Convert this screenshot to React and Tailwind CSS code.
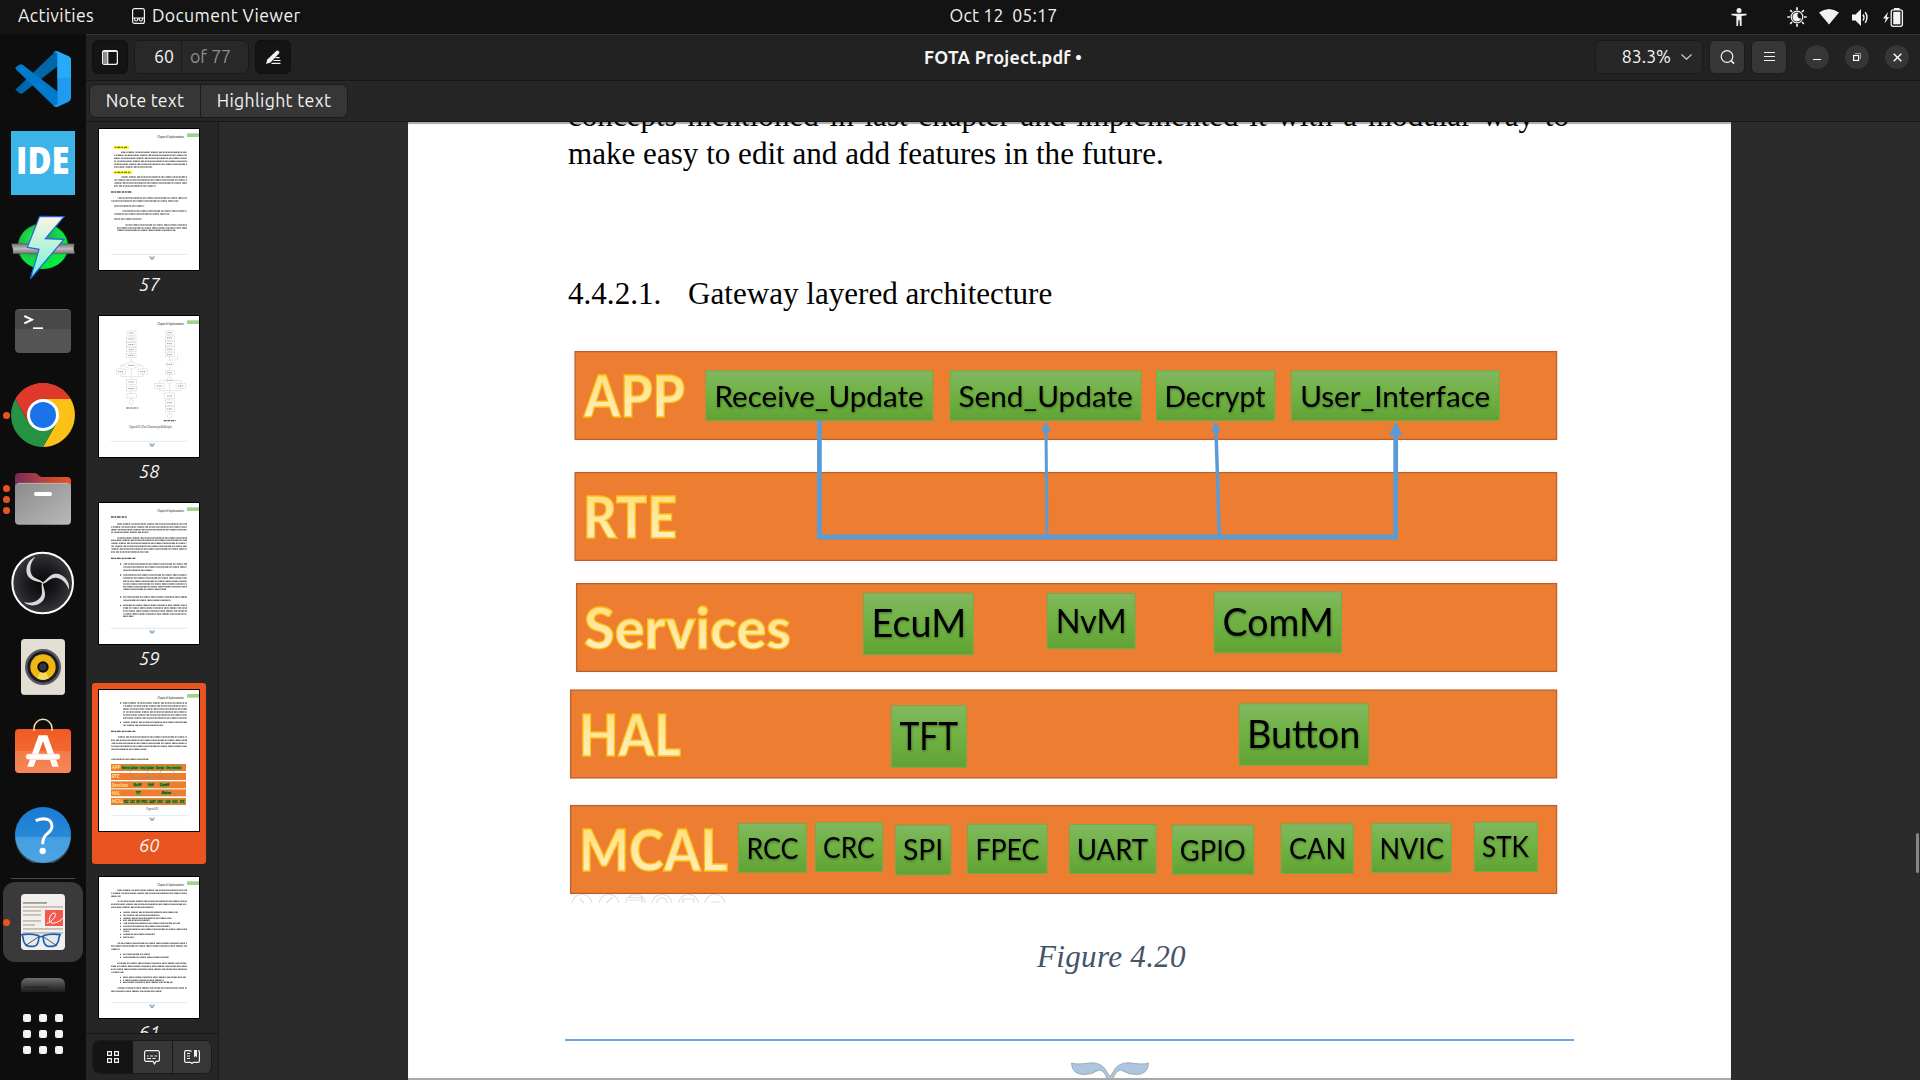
import React from "react";

const UI = "font-['Ubuntu','Noto_Sans',sans-serif]";

/* ---------- dock icons ---------- */

const VSCode = () => (
  <svg width="56" height="56" viewBox="0 0 168 168">
    <path d="M4 113 L120 2 Q128 -2 128 8 L128 46 L24 126 Q18 131 12 125 L2 116 Q-1 114 4 113Z" fill="#0065a9" />
    <path d="M4 56 Q-1 52 3 48 L13 41 Q18 38 24 42 L128 122 L128 160 Q124 171 116 164 Z" fill="#007acc" />
    <path d="M127 0 L161 16 Q168 20 168 27 V141 Q168 148 161 152 L127 168 Q120 169 114 163 Q126 168 127 156 V12 Q126 0 114 5 Q120 -1 127 0Z" fill="#1f9cf0" />
    <path d="M127 4 L161 16 Q168 20 168 27 V80 H127Z" fill="#2bb0fb" opacity=".7" />
  </svg>
);

const Ide = () => (
  <svg width="64" height="64" viewBox="0 0 64 64">
    <rect width="64" height="64" fill="#3cb4e7" />
    <text x="5" y="43" textLength="53.5" lengthAdjust="spacingAndGlyphs" fontFamily="Open Sans, sans-serif" fontWeight="800" fontSize="36.500" fill="#fff">IDE</text>
  </svg>
);

const Lightning = () => (
  <svg width="64" height="64" viewBox="0 0 192 192">
    <defs>
      <linearGradient id="boltFill" x1="0" y1="0" x2="0" y2="1"><stop offset="0" stopColor="#fbf6e2" /><stop offset=".6" stopColor="#a5f3da" /><stop offset="1" stopColor="#5df5d8" /></linearGradient>
      <radialGradient id="boltOrb" cx=".3" cy=".3" r=".8"><stop offset="0" stopColor="#1ef24a" /><stop offset=".4" stopColor="#1fae50" /><stop offset=".6" stopColor="#12d945" /><stop offset="1" stopColor="#00f23c" /></radialGradient>
      <linearGradient id="boltBar" x1="0" y1="0" x2="0" y2="1"><stop offset="0" stopColor="#6f6f6f" /><stop offset=".5" stopColor="#bcbcbc" /><stop offset="1" stopColor="#757575" /></linearGradient>
    </defs>
    <ellipse cx="96" cy="94" rx="76" ry="69" fill="url(#boltOrb)" stroke="#052a10" strokeWidth="2" />
    <path d="M1 86 H190 L188 100 L191 116 H6 V104Z" fill="url(#boltBar)" stroke="#444" />
    <path d="M86 4 L159 5 L103 71 L159 73 L58 192 L84 103 L49 97Z" fill="url(#boltFill)" stroke="#2b5fe0" strokeWidth="3.5" />
  </svg>
);

const Terminal = () => (
  <svg width="56" height="44" viewBox="0 0 168 132">
    <rect width="168" height="132" rx="13" fill="#555" />
    <path d="M0 60 V13 Q0 0 13 0 H155 Q168 0 168 13 V60Z" fill="#484848" />
    <path d="M12 1 H156" stroke="#777" strokeWidth="2" />
    <path d="M28 21 L51 32 L28 43" fill="none" stroke="#fff" strokeWidth="6" />
    <rect x="54" y="55" width="30" height="5" fill="#fff" />
  </svg>
);

const Chrome = () => (
  <svg width="64" height="64" viewBox="0 0 192 192">
    <path d="M96 96 L13 48 A96 96 0 0 1 179 48 L96 48Z" fill="#e33b2e" />
    <path d="M96 96 L137 120 L96 192 A96 96 0 0 0 179 48 L96 48Z" fill="#fbc116" />
    <path d="M96 96 L54 120 L13 48 A96 96 0 0 0 96 192 L137 120Z" fill="#259244" />
    <path d="M13 48 L54 120 L96 60 L96 48 L179 48 A96 96 0 0 0 13 48Z" fill="#df382c" />
    <circle cx="96" cy="96" r="48" fill="#fff" />
    <circle cx="96" cy="96" r="39" fill="#1a73e8" />
  </svg>
);

const Files = () => (
  <svg width="56" height="52" viewBox="0 0 168 156">
    <defs>
      <linearGradient id="folderBack" x1="0" y1="0" x2="1" y2="0"><stop offset="0" stopColor="#762a5c" /><stop offset=".5" stopColor="#b8433f" /><stop offset="1" stopColor="#e95420" /></linearGradient>
      <linearGradient id="folderFront" x1="0" y1="0" x2="1" y2="1"><stop offset="0" stopColor="#8b8b8b" /><stop offset="1" stopColor="#b9b9b9" /></linearGradient>
    </defs>
    <path d="M0 90 V12 Q0 0 12 0 H60 Q66 0 72 8 Q76 12 84 12 H156 Q168 12 168 24 V90Z" fill="url(#folderBack)" />
    <rect y="30" width="168" height="125" rx="12" fill="url(#folderFront)" />
    <path d="M10 31 H158" stroke="#c8c8c8" strokeWidth="2" />
    <rect x="57" y="57" width="54" height="12" rx="5" fill="#fff" />
  </svg>
);

const Obs = () => (
  <svg width="64" height="64" viewBox="0 0 192 192">
    <defs>
      <radialGradient id="obsFill"><stop offset="0" stopColor="#050506" /><stop offset=".55" stopColor="#1d1b1f" /><stop offset="1" stopColor="#39363b" /></radialGradient>
    </defs>
    <circle cx="95" cy="96" r="91" fill="url(#obsFill)" stroke="#fff" strokeWidth="6" />
    <g fill="#d9d9da">
      <path d="M73 18 C48 26 38 62 55 80 C68 92 84 90 95 97 L96 94 C86 84 68 84 61 69 C54 52 60 32 73 18Z" />
      <path d="M73 18 C48 26 38 62 55 80 C68 92 84 90 95 97 L96 94 C86 84 68 84 61 69 C54 52 60 32 73 18Z" transform="rotate(120 95 96)" />
      <path d="M73 18 C48 26 38 62 55 80 C68 92 84 90 95 97 L96 94 C86 84 68 84 61 69 C54 52 60 32 73 18Z" transform="rotate(240 95 96)" />
    </g>
  </svg>
);

const Rhythmbox = () => (
  <svg width="44" height="56" viewBox="0 0 132 168">
    <rect width="132" height="168" rx="11" fill="#e2ded3" />
    <path d="M8 167 H124" stroke="#bcb8ac" strokeWidth="2" />
    <circle cx="66" cy="84" r="54" fill="#5a5a5c" />
    <circle cx="66" cy="84" r="47" fill="#1c1b2c" />
    <circle cx="66" cy="84" r="38" fill="#edb80f" />
    <path d="M66 84 L48 118 A38 38 0 0 0 84 118Z" fill="#f9da5e" />
    <circle cx="66" cy="84" r="17" fill="#0c0c0c" />
    <circle cx="66" cy="84" r="11" fill="#343434" />
  </svg>
);

const Software = () => (
  <svg className="mb-3 overflow-visible" width="56" height="56" viewBox="0 0 168 168">
    <defs><linearGradient id="bag" x1="0" y1="0" x2="0" y2="1"><stop offset="0" stopColor="#f05a22" /><stop offset="1" stopColor="#f4773f" /></linearGradient></defs>
    <rect y="36" width="168" height="132" rx="12" fill="url(#bag)" />
    <path d="M0 102 H168 V156 Q168 168 156 168 H12 Q0 168 0 156Z" fill="#fff" opacity=".12" />
    <path d="M57 42 V34 A27 27 0 0 1 111 34 V42" fill="none" stroke="#f6dcae" strokeWidth="4.5" />
    <path d="M71 55 H97 L131 149 H112 L105 129 H63 L56 149 H37Z M84 72 L70 111 H98Z" fill="#fff" fillRule="evenodd" />
    <rect x="33" y="111" width="102" height="16" rx="7" fill="#fff" stroke="#fbc9ae" strokeWidth="2" />
  </svg>
);

const Help = () => (
  <svg width="56" height="56" viewBox="0 0 168 168">
    <defs><linearGradient id="helpFill" x1="0" y1="0" x2="0" y2="1"><stop offset="0" stopColor="#1a7bd4" /><stop offset="1" stopColor="#3593dd" /></linearGradient></defs>
    <circle cx="84" cy="84" r="84" fill="url(#helpFill)" />
    <path d="M0 90 H168 A84 84 0 0 1 0 90Z" fill="#7cc8ee" opacity=".35" />
    <path d="M62 41 Q75 35 87 35 Q110 36 111 57 Q111 69 97 80 Q83 91 83 112" fill="none" stroke="#fff" strokeWidth="9" strokeLinecap="butt" />
    <circle cx="83" cy="132" r="9.500" fill="#fff" />
  </svg>
);

const Evince = () => (
  <svg width="44" height="56" viewBox="0 0 132 168">
    <rect width="132" height="168" rx="11" fill="#f1f0ef" />
    <rect x="6" y="24" width="72" height="5.500" fill="#a49d8e" />
    <g fill="#c6c0b4">
      <rect x="6" y="36" width="120" height="5.500" /><rect x="6" y="48" width="54" height="5.500" /><rect x="6" y="60" width="54" height="5.500" />
      <rect x="6" y="78" width="54" height="5.500" /><rect x="6" y="90" width="36" height="5.500" /><rect x="6" y="102" width="120" height="5.500" /><rect x="6" y="114" width="120" height="5.500" />
    </g>
    <rect x="72" y="48" width="54" height="48" fill="#f4594d" />
    <path d="M77 88 C92 84 108 66 102 58 C94 52 82 72 86 82 C92 94 116 84 126 72" fill="none" stroke="#fff" strokeWidth="3" />
    <g fill="#dfe6ee" fillOpacity=".5" stroke="#1a5fb4" strokeWidth="5">
      <path d="M3 122 Q30 118 53 125 Q55 152 40 157 H24 Q8 154 6 130Z" />
      <path d="M117 122 Q90 118 67 125 Q65 152 80 157 H96 Q112 154 114 130Z" />
    </g>
    <path d="M52 131 Q60 124 68 131" fill="none" stroke="#1a5fb4" strokeWidth="5" />
    <path d="M12 156 L50 130 M108 156 L70 130" stroke="#555" strokeWidth="3" />
  </svg>
);

const dock = [
  { icon: <VSCode /> }, { icon: <Ide /> }, { icon: <Lightning /> }, { icon: <Terminal /> },
  { icon: <Chrome />, dots: 1 }, { icon: <Files />, dots: 3 }, { icon: <Obs /> },
  { icon: <Rhythmbox /> }, { icon: <Software /> }, { icon: <Help /> },
];

const Dots = ({ n }) => (
  <div className="absolute left-[3px] top-0 flex h-full flex-col justify-center gap-1">
    {Array.from({ length: n }, (_, i) => <span key={i} className="size-[7px] rounded-full bg-[#e95420]" />)}
  </div>
);

const Dock = () => (
  <nav className="flex w-[86px] shrink-0 flex-col bg-[#0d0d0d] pt-[3px]">
    {dock.map((d, i) => (
      <div key={i} className="relative flex h-[84px] w-full items-center justify-center">
        {d.dots && <Dots n={d.dots} />}
        {d.icon}
      </div>
    ))}
    <div className="mx-[11px] mt-[1px] h-px bg-[#4a4a4a]" />
    <div className="relative mx-[3px] mt-[3px] flex h-20 items-center justify-center rounded-xl bg-[#3a3a3a]">
      <div className="absolute -left-[3px] top-0 h-full"><Dots n={1} /></div>
      <Evince />
    </div>
    <div className="mx-auto mt-4 flex h-[14px] w-11 flex-col gap-1 rounded-t-md bg-gradient-to-b from-[#6e6e6e] to-[#1c1c1c] px-1 pt-2">
      <div className="h-[2px] w-6 bg-[#2a2a2a]" />
    </div>
    <div className="mx-auto mt-[22px] grid grid-cols-3 gap-2">
      {Array.from({ length: 9 }, (_, i) => <span key={i} className="size-2 rounded-[2px] bg-[#f2f2f2]" />)}
    </div>
  </nav>
);

/* ---------- top panel ---------- */

const TopBar = () => (
  <header className="grid h-[34px] grid-cols-[1fr_auto_1fr] items-center bg-[#131313] text-[17.7px] tracking-[0.35px] text-[#f2f2f2]">
    <div className="flex items-center pb-px pl-[18px]">
      <span className="w-[77px] whitespace-nowrap">Activities</span>
      <svg className="ml-[37px]" width="13" height="16" viewBox="0 0 13 16" fill="none" stroke="#f2f2f2">
        <rect x=".6" y=".6" width="11.800" height="14.800" rx="2" strokeWidth="1.200" />
        <path d="M1 10 H12 M2.500 10.500 Q2.500 13 4.200 13 Q5.800 13 5.800 10.500 M7.200 10.500 Q7.200 13 8.800 13 Q10.500 13 10.500 10.500" strokeWidth="1.100" />
      </svg>
      <span className="ml-[7px] whitespace-nowrap">Document Viewer</span>
    </div>
    <div className="whitespace-pre pb-px pl-[87px] tracking-[0.2px]"><span>Oct 12  05:17</span></div>
    <div className="flex items-center justify-end pr-4 text-[#f2f2f2]">
      <svg className="mr-[40px]" width="16" height="18" viewBox="0 0 16 18" fill="currentColor">
        <circle cx="8" cy="2.600" r="2.500" /><path d="M.5 5.800 H15.500 V7.300 L10.600 8 V18 H9 L8.500 12 H7.500 L7 18 H5.400 V8 L.5 7.300Z" />
      </svg>
      <svg className="mr-3" width="20" height="20" viewBox="0 0 20 20" fill="currentColor">
        <path d="M10 .3V3 M10 17V19.700 M.3 10H3 M17 10H19.700 M3.200 3.200L5 5 M15 15L16.800 16.800 M3.200 16.800L5 15 M15 5L16.800 3.200" stroke="currentColor" strokeWidth="1.700" />
        <circle cx="10" cy="10" r="5.800" fill="none" stroke="currentColor" strokeWidth="1.200" />
        <path d="M10 5.500 A4.500 4.500 0 1 0 14.500 10 A3.300 3.300 0 0 1 10 5.500Z" transform="rotate(20 10 10)" />
      </svg>
      <svg className="mr-[13px]" width="20" height="16" viewBox="0 0 20 16" fill="currentColor"><path d="M0 3.500 Q10 -3.500 20 3.500 L10 15.500Z" /></svg>
      <svg className="mr-[13px]" width="18" height="17" viewBox="0 0 18 17" fill="currentColor">
        <path d="M0 5.500 H3.500 L9 0 V17 L3.500 11.500 H0Z" />
        <path d="M11 5.500 Q13 8.500 11 11.500 M13.200 3.200 Q16.800 8.500 13.200 13.800" fill="none" stroke="currentColor" strokeWidth="1.500" />
      </svg>
      <svg width="21" height="19" viewBox="0 0 21 19" fill="currentColor">
        <path d="M5 4 L0 10.500 H2.800 L1.500 15.500 L6.200 9 H3.800Z" />
        <rect x="8.200" y="1.800" width="11.200" height="16.500" rx="2" fill="none" stroke="currentColor" strokeWidth="1.300" />
        <rect x="10.200" y="3.800" width="7.200" height="12.500" /><rect x="11" y="0" width="5.600" height="2" />
      </svg>
    </div>
  </header>
);

const HeaderBar = () => (
  <div className="grid h-[47px] grid-cols-[1fr_auto_1fr] items-center border-b border-t border-b-[#171717] border-t-[#363636] bg-[#222] text-[17.7px] text-[#f5f5f5]">
    <div className="flex items-center pb-px pl-[6px]">
      <div className="flex h-[34px] w-9 items-center justify-center rounded-md border border-[#101010] bg-[#141414]">
        <svg width="16" height="15" viewBox="0 0 16 15"><rect x=".6" y=".6" width="14.800" height="13.800" rx="1.800" fill="none" stroke="#f2f2f2" strokeWidth="1.300" /><rect x="1.200" y="2" width="4" height="12" fill="#8f8f8f" /><path d="M1 1.500 H15 M5.700 1V14" stroke="#f2f2f2" strokeWidth="1.200" /></svg>
      </div>
      <div className="ml-[6px] flex h-[34px] w-[115px] items-center rounded-md border border-[#191919] bg-[#282828]">
        <span className="flex h-full w-[47px] items-center justify-end border-r border-[#191919] pr-[7px]">60</span>
        <span className="pl-[8px] text-[#8e8e8e]">of 77</span>
      </div>
      <div className="ml-[6px] flex h-[34px] w-9 items-center justify-center rounded-md border border-[#101010] bg-[#141414]">
        <svg width="15" height="15" viewBox="0 0 15 15" fill="#f2f2f2"><path d="M0 14 L1.300 9.500 L10.500 .8 Q11.500 0 12.700 1.200 Q13.800 2.500 13 3.400 L4.500 12.500Z" /><path d="M9.500 7.700H13.500 M7.500 10.500H14.500 M5.500 13.300H14.500" stroke="#f2f2f2" strokeWidth="1.200" /></svg>
      </div>
    </div>
    <div className="pb-px text-[17.8px] font-bold tracking-[0.2px]">FOTA Project.pdf •</div>
    <div className="flex items-center justify-end pb-px pr-[11px]">
      <div className="flex h-[34px] w-[108px] items-center justify-end rounded-md border border-[#191919] bg-[#272727] pr-[10px]">
        <span>83.3%</span>
        <svg className="ml-[10px]" width="11" height="6" viewBox="0 0 11 6" fill="none" stroke="#cfcfcf" strokeWidth="1.200"><path d="M.5 .5 L5.500 5.200 L10.500 .5" /></svg>
      </div>
      <div className="ml-[6px] flex h-[34px] w-9 items-center justify-center rounded-md border border-[#1b1b1b] bg-[#363636]">
        <svg width="15" height="15" viewBox="0 0 15 15" fill="none" stroke="#f2f2f2" strokeWidth="1.200"><circle cx="7" cy="6.500" r="5.800" /><path d="M11 10.500 L14 13.700" strokeWidth="1.700" /></svg>
      </div>
      <div className="ml-[6px] flex h-[34px] w-9 items-center justify-center rounded-md border border-[#1b1b1b] bg-[#363636]">
        <svg width="11" height="10" viewBox="0 0 11 10" stroke="#f2f2f2"><path d="M0 .5H11 M0 4.500H11 M0 8.500H11" /></svg>
      </div>
      <div className="ml-[18px] flex gap-4">
        <span className="flex size-6 items-center justify-center rounded-full bg-[#363636]"><svg width="8" height="8" viewBox="0 0 8 8"><path d="M0 6.500H8" stroke="#fff" /></svg></span>
        <span className="flex size-6 items-center justify-center rounded-full bg-[#363636]"><svg width="8" height="8" viewBox="0 0 8 8" fill="none" stroke="#fff"><rect x=".6" y="2.500" width="5" height="5" strokeWidth="1.200" /><path d="M2 .5H7.500V6" stroke="#999" /></svg></span>
        <span className="flex size-6 items-center justify-center rounded-full bg-[#363636]"><svg width="9" height="9" viewBox="0 0 9 9"><path d="M.7 .7L8.300 8.300M8.300 .7L.7 8.300" stroke="#fff" strokeWidth="1.400" /></svg></span>
      </div>
    </div>
  </div>
);

const AnnotationBar = () => (
  <div className="flex h-[41px] items-center border-b border-[#171717] bg-[#262626] pl-[3px] text-[17.7px] tracking-[0.25px] text-[#f2f2f2]">
    <div className="flex h-[34px] overflow-hidden rounded-[7px] border border-[#1b1b1b] bg-[#363636]">
      <span className="flex w-[111px] items-center justify-center border-r border-[#1b1b1b]">Note text</span>
      <span className="flex w-[146px] items-center justify-center tracking-[0.35px]">Highlight text</span>
    </div>
  </div>
);

/* ---------- thumbnails ---------- */
/* Page drawings use a 303 x 423 unit sheet; rows are [x1, x2, y]. */

const L = (x1, x2, ...ys) => ys.map((y) => [x1, x2, y]);

const Ornament = ({ y }) => (
  <g>
    <path d={`M36 ${y - 10}H264`} stroke="#d3e4f4" strokeWidth="2.500" />
    <path d={`M151 ${y - 5}Q159 ${y - 4} 159 ${y}Q160 ${y - 4} 168 ${y - 5}L166 ${y}L163 ${y + 6}H156L152 ${y}Z`} fill="#9fb3c6" />
  </g>
);

const Sheet = ({ rows, heads = [], footer = 387, header = 25, children }) => (
  <svg width="100" height="141" viewBox="0 0 300 423" className="block bg-white">
    <rect x="264" y={header - 12} width="39" height="11" fill="#a3d08c" />
    <text x="175" y={header + 3} textLength="80" fontSize="9" fontFamily="Liberation Serif, serif" fill="#333">Chapter 4: Implementation</text>
    {rows.map(([a, b, y], i) => (
      <g key={i} stroke="#222" strokeDashoffset={i * 11}>
        <path d={`M${a} ${y}H${b}`} strokeOpacity=".36" strokeWidth="4.500" strokeDasharray="14 2.500 22 3 9 2.500 17 3" />
        <path d={`M${a} ${y}H${b}`} strokeOpacity=".5" strokeWidth="3" strokeDasharray="3 3 6 4 3 5 8 3 4 6" />
      </g>
    ))}
    {heads.map(([a, b, y], i) => (
      <path key={i} d={`M${a} ${y}H${b}`} stroke="#111" strokeOpacity=".7" strokeWidth="4" strokeDasharray="8 2 5 2 12 3" />
    ))}
    {children}
    <Ornament y={footer} />
  </svg>
);

const P57 = () => (
  <Sheet
    footer={386}
    rows={[...L(66, 264, 70), ...L(45, 264, 79, 88, 97, 106), [45, 160, 114], [66, 264, 144], ...L(45, 264, 153, 162), [45, 171, 171], [55, 264, 207], [36, 238, 216], [45, 136, 231], [69, 264, 246], [45, 211, 255], [45, 128, 270], [78, 264, 288], [54, 264, 297], [54, 230, 304]]}
    heads={[[36, 99, 189]]}
  >
    <rect x="45" y="51" width="45" height="9" fill="#fdf90a" />
    <rect x="45" y="126" width="54" height="9" fill="#fdf90a" />
    <path d="M47 55H87M47 130H96" stroke="#222" strokeOpacity=".6" strokeWidth="3.500" strokeDasharray="5 3 9 3" />
  </Sheet>
);

const P58 = () => (
  <Sheet footer={386} rows={[]}>
    <g fill="#fff" stroke="#cfcfcf" strokeWidth="1.500">
      <path d="M97 51V265M212 51V300M97 148H66V170M97 148H132V170M66 170V182H97M132 170V182H97M212 194H182V220M212 194H246V220M182 215V224H246V215M212 132H236V116" fill="none" />
      <rect x="83" y="45" width="29" height="13" rx="6" /><rect x="198" y="43" width="29" height="13" rx="6" />
      {[63, 80, 94, 112].map((y) => <rect key={y} x="83" y={y} width="28" height="13" />)}
      {[60, 77, 92, 109].map((y) => <rect key={y} x="199" y={y} width="27" height="13" />)}
      <path d="M97 136L124 148L97 160L70 148ZM212 132L226 145L212 158L198 145ZM212 182L228 193L212 204L196 193Z" />
      <rect x="52" y="159" width="27" height="15" /><rect x="118" y="159" width="27" height="15" />
      <rect x="82" y="190" width="31" height="16" /><rect x="82" y="211" width="31" height="14" /><rect x="84" y="233" width="28" height="13" />
      <rect x="199" y="163" width="27" height="13" /><rect x="167" y="202" width="29" height="15" /><rect x="231" y="202" width="29" height="15" />
      <rect x="197" y="231" width="29" height="17" /><rect x="199" y="252" width="27" height="16" /><rect x="199" y="272" width="27" height="14" />
      <circle cx="97" cy="258" r="7" /><circle cx="212" cy="300" r="7" />
    </g>
    <path d="M90 51H104M88 69H106M88 86H106M90 101H104M88 118H106M88 148H106M57 167H73M124 167H140M88 198H106M88 218H106M205 50H219M204 66H220M204 83H220M204 99H220M204 116H220M204 145H220M204 170H220M204 193H220M173 210H190M237 210H254M204 240H220M204 260H220M204 279H220" stroke="#999" strokeWidth="3" strokeDasharray="4 1.500" />
    <path d="M81 276H118M194 314H230" stroke="#666" strokeWidth="3.500" strokeDasharray="9 2" />
    <text x="90" y="336" textLength="129" fontSize="9" fontStyle="italic" fontFamily="Liberation Serif, serif" fill="#44546a">Figure 4.19: (Flow Chart encrypt &amp; Decrypt )</text>
  </Sheet>
);

const P59 = () => (
  <Sheet
    footer={386}
    rows={[[55, 264, 63], ...L(36, 264, 72, 80), [36, 149, 88], [55, 264, 105], ...L(36, 264, 112, 121, 130, 138), [36, 148, 147], ...L(72, 264, 183, 192), [72, 161, 202], ...L(72, 264, 216, 225, 235, 243, 251), [72, 201, 259], [72, 264, 282], [72, 217, 292], ...L(72, 264, 307, 315, 324, 333), [72, 103, 340]]}
    heads={[[36, 85, 42], [36, 111, 166]]}
  >
    {[183, 216, 282, 307].map((y) => <circle key={y} cx="65" cy={y} r="2" fill="#333" />)}
  </Sheet>
);

const bars60 = [
  [222, "APP", 26, [[32, 51, "Receive_Update"], [87, 43, "Send_Update"], [134, 27, "Decrypt"], [165, 47, "User_Interface"]]],
  [249, "RTE", 23, []],
  [274, "Services", 49, [[67, 25, "EcuM"], [110, 19, "NvM"], [146, 29, "ComM"]]],
  [298, "HAL", 25, [[74, 16, "TFT"], [152, 29, "Button"]]],
  [324, "MCAL", 34, [[38, 16, "RCC"], [57, 15, "CRC"], [75, 13, "SPI"], [90, 20, "FPEC"], [114, 21, "UART"], [138, 18, "GPIO"], [162, 17, "CAN"], [183, 18, "NVIC"], [206, 15, "STK"]]],
];

const P60 = () => (
  <Sheet
    footer={387}
    header={24}
    rows={[...L(72, 264, 39, 48, 57, 66, 75, 84, 97), [72, 193, 106], [55, 264, 141], ...L(36, 264, 151, 160, 169), [36, 143, 178], [36, 148, 208]]}
    heads={[[36, 111, 124]]}
  >
    <circle cx="65" cy="39" r="2" fill="#333" /><circle cx="65" cy="97" r="2" fill="#333" />
    {bars60.map(([y, name, w, items]) => (
      <g key={name}>
        <rect x="36" y={y} width="225" height="21" fill="#ed7d31" />
        <text x="38" y={y + 15.5} textLength={w} lengthAdjust="spacingAndGlyphs" fontFamily="Lato, sans-serif" fontWeight="900" fontSize="14" fill="#ffe38d">{name}</text>
        {items.map(([x, iw, t]) => (
          <g key={t}>
            <rect x={36 + x} y={y + 4} width={iw} height="13" fill="#6aaa3e" />
            <text x={37 + x} y={y + 13.5} textLength={iw - 2} lengthAdjust="spacingAndGlyphs" fontFamily="Lato, sans-serif" fontWeight="700" fontSize="9" fill="#111">{t}</text>
          </g>
        ))}
      </g>
    ))}
    <path d="M94 238V263H224V238M146 238V263M184 238V263" fill="none" stroke="#8a93a0" strokeWidth="1.500" />
    <text x="141" y="360" textLength="36" fontSize="9" fontStyle="italic" fontFamily="Liberation Serif, serif" fill="#44546a">Figure 4.20</text>
  </Sheet>
);

const P61 = () => (
  <Sheet
    footer={387}
    header={25}
    rows={[[55, 264, 40], [36, 264, 49], [36, 66, 58], [55, 264, 73], [36, 264, 82], [36, 163, 91], [72, 237, 106], [72, 183, 115], [72, 218, 124], [72, 153, 130], [72, 243, 139], [72, 213, 148], [72, 264, 157], [72, 91, 163], [72, 168, 172], [72, 106, 181], [55, 264, 199], [36, 264, 207], [36, 63, 217], [72, 155, 232], [72, 210, 241], [55, 264, 259], [36, 264, 268], [36, 264, 277], [36, 73, 286], [72, 261, 301], [72, 195, 310], [72, 221, 316], [55, 264, 333], [36, 188, 343]]}
  >
    {[106, 115, 124, 130, 139, 148, 157, 172, 181, 232, 241, 301, 310, 316].map((y) => <path key={y} d={`M63 ${y}h3`} stroke="#444" strokeWidth="3" />)}
  </Sheet>
);

const pages = [[57, P57], [58, P58], [59, P59], [60, P60], [61, P61]];

const Sidebar = () => (
  <aside className="flex w-[133px] shrink-0 flex-col border-r border-[#1a1a1a] bg-[#262626]">
    <div className="h-[911px] overflow-hidden pl-[6px] text-center text-[18px] italic leading-6 text-[#f5f5f5]">
      {pages.map(([n, Page]) => (
        <div key={n} className={n === 60 ? "mb-[6px] h-[181px] w-[114px] rounded-[3px] bg-[#e95420] pt-[6px]" : "mb-[6px] h-[181px] w-[114px] pt-[6px]"}>
          <div className="mx-auto w-[102px] border border-black"><Page /></div>
          <div className="mt-px pl-px">{n}</div>
        </div>
      ))}
    </div>
    <div className="flex flex-1 items-center border-t border-[#171717] pl-[6px]">
      <div className="flex h-[34px] w-[120px] overflow-hidden rounded-[7px] border border-[#1a1a1a] bg-[#363636]">
        <span className="flex w-10 items-center justify-center bg-[#141414] pr-px">
          <svg width="12" height="12" viewBox="0 0 12 12" fill="none" stroke="#f2f2f2" strokeWidth="1.200"><path d="M.6.600h3.800v3.800h-3.800zM7.600.600h3.800v3.800h-3.800zM.6 7.600h3.800v3.800h-3.800zM7.600 7.600h3.800v3.800h-3.800z" /></svg>
        </span>
        <span className="flex w-10 items-center justify-center border-r border-[#1a1a1a] pr-px">
          <svg width="16" height="15" viewBox="0 0 16 15" fill="none" stroke="#f2f2f2" strokeWidth="1.200"><path d="M2.500.600H13.500Q15.400.600 15.400 2.500V9.500Q15.400 11.400 13.500 11.400H12L10.500 13.800L9 11.400H2.500Q.6 11.400.6 9.500V2.500Q.6.600 2.500.600Z" /><path d="M3 6H4.500M6 6H9M10.500 6H13M3 8.500H7M8.500 8.500H11.500" /></svg>
        </span>
        <span className="flex flex-1 items-center justify-center">
          <svg width="16" height="14" viewBox="0 0 16 14" fill="none" stroke="#f2f2f2" strokeWidth="1.200"><path d="M7.500 1.500Q6.500.600 5 .6H2Q.6.600.6 2V11.200Q.6 12.400 2 12.400H6.500L8 13.400L9.500 12.400H14Q15.400 12.400 15.400 11V2Q15.400.600 14 .6" /><path d="M3 3.500H6M3 6H6M3 8.500H6" /><path d="M10 0H13V7.500L11.500 6L10 7.500Z" fill="#f2f2f2" stroke="none" /></svg>
        </span>
      </div>
    </div>
  </aside>
);

/* ---------- layered architecture figure ---------- */

const layers = [
  { name: "APP", x: 574.5, y: 351, h: 89, tx: 584, tw: 101, ty: 416.5 },
  { name: "RTE", x: 574.5, y: 472, h: 89, tx: 583, tw: 94, ty: 538 },
  { name: "Services", x: 576, y: 583, h: 89, tx: 584, tw: 207, ty: 649 },
  { name: "HAL", x: 570, y: 689.5, h: 89, tx: 579, tw: 102, ty: 755.5 },
  { name: "MCAL", x: 570, y: 805, h: 89, tx: 579, tw: 149, ty: 871 },
];

/* [label, x, y, width, height, textLeft, textRight, baseline, size] */
const modules = [
  ["Receive_Update", 705.5, 370.3, 227.8, 50.7, 717, 922.5, 406.7, 29.8],
  ["Send_Update", 949.6, 370.3, 191.8, 50.7, 959.5, 1131.6, 406.7, 29.8],
  ["Decrypt", 1156, 370.3, 119.2, 50.7, 1167, 1265, 406.7, 29.8],
  ["User_Interface", 1291, 370.3, 208.7, 50.7, 1302.5, 1489, 406.7, 29.8],
  ["EcuM", 863, 592.7, 110.6, 62.3, 875, 963, 637, 39],
  ["NvM", 1046.7, 593, 88.8, 56, 1058.5, 1123.5, 632.7, 32.6],
  ["ComM", 1213.7, 591.3, 128.3, 62, 1223.8, 1330.5, 636, 39],
  ["TFT", 891, 705.3, 75.8, 62.4, 900, 957.5, 749.5, 39],
  ["Button", 1238.7, 703.3, 130.2, 62.4, 1250.3, 1357.5, 748.3, 39],
  ["RCC", 738, 823, 68.7, 49.7, 749, 797.5, 858.7, 29.3],
  ["CRC", 815, 822.2, 68, 49.7, 824.3, 873.7, 858, 29.3],
  ["SPI", 895.3, 824.6, 56, 50.7, 904, 940.3, 860.3, 29.3],
  ["FPEC", 967, 823.7, 80.5, 50.3, 978, 1038.5, 859.7, 29.3],
  ["UART", 1069, 824, 87.4, 50, 1079, 1147.5, 860, 29.3],
  ["GPIO", 1171.9, 824.7, 82.3, 50, 1181, 1244.5, 860.7, 29.3],
  ["CAN", 1280.7, 823.3, 73, 50.7, 1290.3, 1343.5, 859, 29.3],
  ["NVIC", 1371.3, 823, 80.4, 50, 1382.2, 1443, 858.5, 29.3],
  ["STK", 1473.9, 821.7, 64, 50.3, 1483, 1528.5, 857, 29.3],
];

/* Side bearings, so that the ink of each label starts and ends at its bounds. */
const lsb = { R: 2.6, D: 2.6, U: 2.3, E: 3.4, N: 2.8, B: 3.4, F: 2.6, S: 1, C: 1.3, T: 0.6, G: 1.3 };
const rsb = { e: 1.2, t: 0.5, M: 3.2, T: 0.6, n: 2.8, C: 1, I: 2.9, O: 1.3, N: 2.7, K: 0.3 };

const Figure = () => (
  <svg width="1000" height="560" viewBox="565 348 1000 560" className="absolute left-[157px] top-[226px]">
    <defs>
      <linearGradient id="moduleFill" x1="0" y1="0" x2="0" y2="1"><stop offset="0" stopColor="#81b861" /><stop offset=".5" stopColor="#6fb242" /><stop offset="1" stopColor="#61a235" /></linearGradient>
      <linearGradient id="labelFill" x1="0" y1="0" x2="0" y2="1"><stop offset=".2" stopColor="#ffdf7f" /><stop offset=".85" stopColor="#ffefc0" /></linearGradient>
      <filter id="textShadow" x="-10%" y="-20%" width="120%" height="150%"><feDropShadow dx=".5" dy="1.200" stdDeviation="1" floodColor="#000" floodOpacity=".35" /></filter>
    </defs>
    {layers.map((l) => (
      <g key={l.name}>
        <rect x={l.x + 0.6} y={l.y + 0.6} width={1556 - l.x} height={l.h - 1.2} fill="#ed7d31" stroke="#b8622b" strokeWidth="1.300" />
        <text x={l.tx} y={l.ty} textLength={l.tw} lengthAdjust="spacingAndGlyphs" fontFamily="Lato, sans-serif" fontWeight="900" fontSize="56.500" fill="url(#labelFill)" stroke="#fdc010" strokeWidth="1.300">{l.name}</text>
      </g>
    ))}
    {modules.map(([t, x, y, w, h, a, b, base, size]) => {
      const l = lsb[t[0]] || 1;
      const r = rsb[t[t.length - 1]] || 1;
      return (
        <g key={t}>
          <rect x={x + 0.5} y={y + 0.5} width={w - 1} height={h - 1} fill="url(#moduleFill)" stroke="#70ad47" strokeWidth="1" />
          <text x={a - l} y={base} textLength={b - a + l + r} lengthAdjust="spacingAndGlyphs" fontFamily="Lato, sans-serif" fontSize={size} fill="#000" filter="url(#textShadow)">{t}</text>
        </g>
      );
    })}
    <g fill="none" stroke="#5b9bd5">
      <path d="M819.400 420V537H1395.700V432" strokeWidth="4.800" />
      <path d="M1047 537L1046 430" strokeWidth="3" />
      <path d="M1219.300 536L1216 430" strokeWidth="3.500" />
    </g>
    <path d="M1395.700 421.500L1402.500 435.500H1389ZM1046 421L1051 431.500H1041ZM1215.700 421L1220.600 431.500H1211Z" fill="#5b9bd5" />
    <g fill="none" stroke="#dedede" strokeWidth="1.200">
      {[582, 609, 635.5, 662, 688.5, 715].map((x) => <path key={x} d={`M${x - 10} 903Q${x - 8} 894.500 ${x} 894.500Q${x + 8} 894.500 ${x + 10} 903`} />)}
      <path d="M580 899L584 903M606 903L613 897M629 897.500H642V903M629 900H642M657 903Q657 898 662 898Q667 898 667 903M683 903V899H694V903M711 902H720" />
    </g>
  </svg>
);

const Document = () => (
  <main className="flex flex-1 justify-center overflow-hidden bg-[#2b2b2b]">
    <div className="flex w-[189px] shrink-0" />
    <article className="relative w-[1323px] shrink-0 overflow-hidden border-b-2 border-[#a9a9a9] bg-white font-['Liberation_Serif',serif] text-[31.1px] leading-[38px] text-black shadow-[inset_0_2px_1px_#aaa]">
      <div className="-mt-[25px] ml-[160px] w-[1001px]">
        <p className="whitespace-nowrap [text-align-last:justify]">concepts mentioned in last chapter and implemented it with a modular way to</p>
        <p>make easy to edit and add features in the future.</p>
        <h2 className="mt-[102px] flex"><span className="w-[120px]">4.4.2.1.</span><span>Gateway layered architecture</span></h2>
      </div>
      <Figure />
      <p className="ml-[629px] mt-[625px] italic tracking-[0.3px] text-[#44546a]">Figure 4.20</p>
      <div className="ml-[157px] mt-[63px] h-[2px] w-[1009px] bg-[#6ea7db]" />
      <svg className="ml-[663px] mt-[21px] block" width="78" height="17" viewBox="0 0 78 17"><path d="M.5 1Q6 3 20 .8Q32 0 37 12L39 14L41 12Q46 0 58 .8Q72 3 77.500 1Q77 12 66 12.500Q58 13 50 8Q44 9 42 17H36Q34 9 28 8Q20 13 12 12.500Q1 12 .5 1Z" fill="#abc6df" stroke="#9a9fa5" strokeWidth=".8" /></svg>
    </article>
    <div className="relative flex-1">
      <div className="absolute right-px top-[711px] h-[40px] w-[3px] rounded bg-[#868686]" />
    </div>
  </main>
);

export default function App() {
  return (
    <div className={`${UI} flex h-[1080px] w-[1920px] flex-col overflow-hidden bg-[#0d0d0d]`}>
      <TopBar />
      <div className="flex min-h-0 flex-1">
        <Dock />
        <section className="flex min-w-0 flex-1 flex-col overflow-hidden">
          <HeaderBar />
          <AnnotationBar />
          <div className="flex min-h-0 flex-1">
            <Sidebar />
            <Document />
          </div>
        </section>
      </div>
    </div>
  );
}
